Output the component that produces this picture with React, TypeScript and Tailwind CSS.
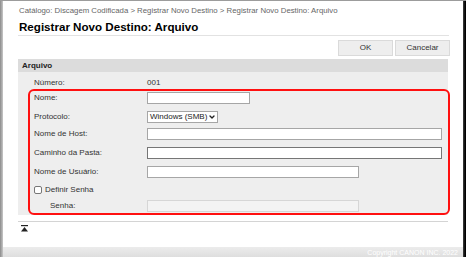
import { ChevronDown } from "lucide-react";

const fields = [
  { label: "Nome:", kind: "input", width: "w-[103px]", mt: "mt-[1px]", border: "border-[#a6a6a6]" },
  { label: "Protocolo:", kind: "select", width: "w-[71px]", mt: "mt-[7px]", border: "border-[#a6a6a6]" },
  { label: "Nome de Host:", kind: "input", width: "w-[295px]", mt: "mt-[5px]", border: "border-[#a6a6a6]" },
  { label: "Caminho da Pasta:", kind: "input", width: "w-[295px]", mt: "mt-[7px]", border: "border-[#767676]" },
  { label: "Nome de Usuário:", kind: "input", width: "w-[212px]", mt: "mt-[7px]", border: "border-[#a6a6a6]" },
];

function TopIcon() {
  return (
    <svg width="7" height="7" viewBox="0 0 7 7" className="block">
      <rect x="0" y="0" width="7" height="1.2" fill="#222" />
      <polygon points="3.5,2 7,6.5 0,6.5" fill="#222" />
    </svg>
  );
}

export default function App() {
  return (
    <div
      className="w-[466px] h-[257px] flex bg-white overflow-hidden border-t border-[#9c9c9c]"
      style={{ fontFamily: '"Liberation Sans", Arial, sans-serif' }}
    >
      <div className="w-[3px] bg-gradient-to-r from-[#8a8a8a] to-[#c8c8c8]" />

      <div className="flex-1 flex flex-col">
        <div className="flex-1 pl-[15px] pr-[14px]">
          <div className="pl-[1px] pt-[5px] text-[7.8px] leading-[10px] text-[#666] whitespace-nowrap">
            Catálogo: Discagem Codificada &gt; Registrar Novo Destino &gt; Registrar Novo Destino: Arquivo
          </div>
          <h1 className="pl-[1px] mt-[4px] pb-[1px] text-[11.6px] leading-[14px] font-bold text-black border-b border-[#e2e2e2]">
            Registrar Novo Destino: Arquivo
          </h1>

          <div className="flex justify-end gap-[2px] mt-[4px] -mr-[1px]">
            <button className="w-[55px] h-[16px] bg-[#eeeeee] border border-[#dadada] text-[8px] text-[#333]">OK</button>
            <button className="w-[55px] h-[16px] bg-[#eeeeee] border border-[#dadada] text-[8px] text-[#333]">Cancelar</button>
          </div>

          <div className="mt-[3px] w-[430px]">
            <div className="h-[13px] bg-[#dcdcdc] pl-[4px] text-[8px] leading-[13px] font-bold text-[#222]">Arquivo</div>
            <div className="bg-[#eeeeee]">
              <div className="pt-[5px] flex items-center h-[17px] text-[8px] text-[#333]">
                <span className="w-[129px] pl-[16px]">Número:</span>
                <span>001</span>
              </div>
              <div className="ml-[10px] -mr-[2px] border-2 border-[#ff1010] rounded-[6px] pl-[4px] pb-[1px]">
                {fields.map((f) => (
                  <div key={f.label} className={`flex items-center h-[12px] ${f.mt} text-[8px] text-[#333]`}>
                    <span className="w-[113px]">{f.label}</span>
                    {f.kind === "input" ? (
                      <div className={`${f.width} h-[12px] bg-white border ${f.border}`} />
                    ) : (
                      <div className={`${f.width} h-[12px] bg-white border ${f.border} flex items-center justify-between pl-[2px] pr-[1px] text-[8px] text-[#222]`}>
                        <span>Windows (SMB)</span>
                        <ChevronDown className="w-[8px] h-[8px]" strokeWidth={4} />
                      </div>
                    )}
                  </div>
                ))}
                <div className="flex items-center h-[12px] mt-[6px] text-[8px] text-[#333]">
                  <span className="w-[8px] h-[8px] border border-[#777] rounded-[2px] bg-white mr-[3px]" />
                  <span>Definir Senha</span>
                </div>
                <div className="flex items-center h-[12px] mt-[4px] text-[8px] text-[#333]">
                  <span className="w-[113px] pl-[16px]">Senha:</span>
                  <div className="w-[212px] h-[12px] bg-[#f3f3f3] border border-[#d6d6d6]" />
                </div>
              </div>
            </div>
            <div className="mt-[6px] border-t border-[#d4d4d4] pt-[3px] pl-[3px]">
              <TopIcon />
            </div>
          </div>
        </div>
        <div className="h-[10px] bg-gradient-to-b from-[#ececec] to-[#dedede] flex justify-end items-end pr-[5px] overflow-hidden">
          <span className="text-[7px] leading-[9px] text-white">Copyright CANON INC. 2022</span>
        </div>
      </div>

      <div className="w-[3px] bg-gradient-to-r from-[#444] to-[#000]" />
    </div>
  );
}
